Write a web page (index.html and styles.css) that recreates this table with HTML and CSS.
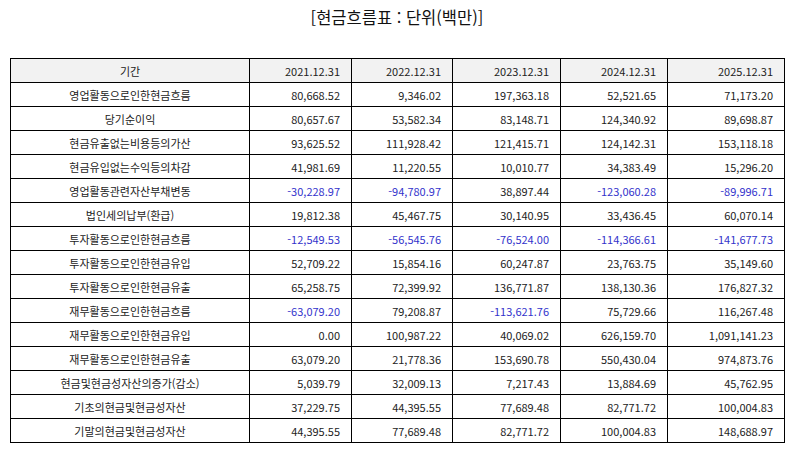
FILE: index.html
```
<!DOCTYPE html>
<html lang="ko">
<head>
<meta charset="utf-8">
<title>현금흐름표</title>
<link rel="stylesheet" href="styles.css">
</head>
<body>
<div class="page">
  <h1 class="title">[현금흐름표 : 단위(백만)]</h1>
  <table class="cf">
    <colgroup>
      <col class="c-label"><col class="c-a"><col class="c-b"><col class="c-c"><col class="c-d"><col class="c-e">
    </colgroup>
    <thead>
      <tr><th class="label">기간</th><th>2021.12.31</th><th>2022.12.31</th><th>2023.12.31</th><th>2024.12.31</th><th>2025.12.31</th></tr>
    </thead>
    <tbody>
      <tr><td class="label">영업활동으로인한현금흐름</td><td>80,668.52</td><td>9,346.02</td><td>197,363.18</td><td>52,521.65</td><td>71,173.20</td></tr>
      <tr><td class="label">당기순이익</td><td>80,657.67</td><td>53,582.34</td><td>83,148.71</td><td>124,340.92</td><td>89,698.87</td></tr>
      <tr><td class="label">현금유출없는비용등의가산</td><td>93,625.52</td><td>111,928.42</td><td>121,415.71</td><td>124,142.31</td><td>153,118.18</td></tr>
      <tr><td class="label">현금유입없는수익등의차감</td><td>41,981.69</td><td>11,220.55</td><td>10,010.77</td><td>34,383.49</td><td>15,296.20</td></tr>
      <tr><td class="label">영업활동관련자산부채변동</td><td class="neg">-30,228.97</td><td class="neg">-94,780.97</td><td>38,897.44</td><td class="neg">-123,060.28</td><td class="neg">-89,996.71</td></tr>
      <tr><td class="label">법인세의납부(환급)</td><td>19,812.38</td><td>45,467.75</td><td>30,140.95</td><td>33,436.45</td><td>60,070.14</td></tr>
      <tr><td class="label">투자활동으로인한현금흐름</td><td class="neg">-12,549.53</td><td class="neg">-56,545.76</td><td class="neg">-76,524.00</td><td class="neg">-114,366.61</td><td class="neg">-141,677.73</td></tr>
      <tr><td class="label">투자활동으로인한현금유입</td><td>52,709.22</td><td>15,854.16</td><td>60,247.87</td><td>23,763.75</td><td>35,149.60</td></tr>
      <tr><td class="label">투자활동으로인한현금유출</td><td>65,258.75</td><td>72,399.92</td><td>136,771.87</td><td>138,130.36</td><td>176,827.32</td></tr>
      <tr><td class="label">재무활동으로인한현금흐름</td><td class="neg">-63,079.20</td><td>79,208.87</td><td class="neg">-113,621.76</td><td>75,729.66</td><td>116,267.48</td></tr>
      <tr><td class="label">재무활동으로인한현금유입</td><td>0.00</td><td>100,987.22</td><td>40,069.02</td><td>626,159.70</td><td>1,091,141.23</td></tr>
      <tr><td class="label">재무활동으로인한현금유출</td><td>63,079.20</td><td>21,778.36</td><td>153,690.78</td><td>550,430.04</td><td>974,873.76</td></tr>
      <tr><td class="label">현금및현금성자산의증가(감소)</td><td>5,039.79</td><td>32,009.13</td><td>7,217.43</td><td>13,884.69</td><td>45,762.95</td></tr>
      <tr><td class="label">기초의현금및현금성자산</td><td>37,229.75</td><td>44,395.55</td><td>77,689.48</td><td>82,771.72</td><td>100,004.83</td></tr>
      <tr><td class="label">기말의현금및현금성자산</td><td>44,395.55</td><td>77,689.48</td><td>82,771.72</td><td>100,004.83</td><td>148,688.97</td></tr>
    </tbody>
  </table>
</div>
</body>
</html>
```
FILE: styles.css
```
html, body {
  margin: 0;
  padding: 0;
  background: #ffffff;
}
body {
  font-family: "Noto Sans CJK KR", "Noto Sans", sans-serif;
  color: #222222;
}
.page {
  padding: 0 10px;
}
.title {
  margin: 0;
  height: 58px;
  padding-top: 5px;
  box-sizing: border-box;
  text-align: center;
  font-size: 16.5px;
  font-weight: 400;
  line-height: 24px;
  color: #111111;
}
.cf {
  width: 774px;
  border-collapse: collapse;
  table-layout: fixed;
  font-size: 11px;
}
.c-label { width: 239px; }
.c-a { width: 102px; }
.c-b { width: 101px; }
.c-c { width: 108px; }
.c-d { width: 107px; }
.c-e { width: 117px; }
.cf th, .cf td {
  border: 1px solid #000000;
  height: 24px;
  padding: 0 11px 0 4px;
  text-align: right;
  font-weight: 400;
  line-height: 14px;
  white-space: nowrap;
  box-sizing: border-box;
}
.cf thead th {
  background: #f2f2f2;
}
.cf .label {
  text-align: center;
  padding: 0 4px;
}
.cf .neg {
  color: #3333cc;
}
```
